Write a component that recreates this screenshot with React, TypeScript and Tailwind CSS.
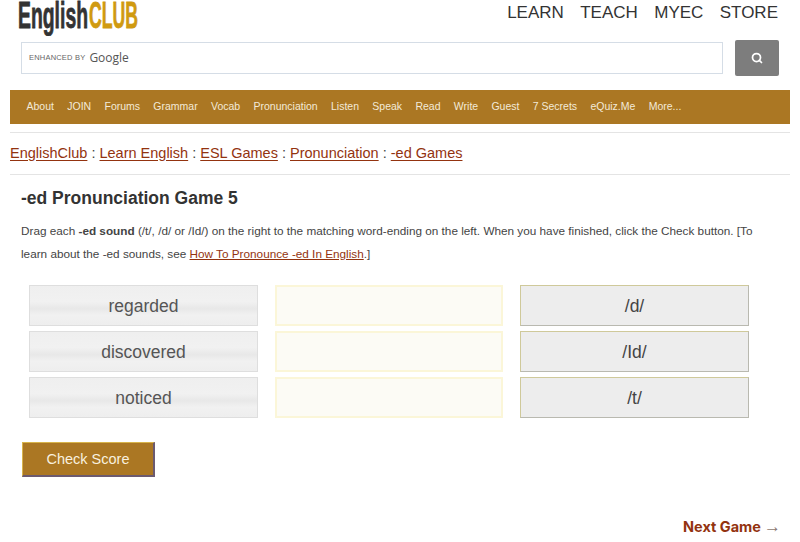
import React from 'react';
import { Search } from 'lucide-react';

const navItems = ['About', 'JOIN', 'Forums', 'Grammar', 'Vocab', 'Pronunciation', 'Listen', 'Speak', 'Read', 'Write', 'Guest', '7 Secrets', 'eQuiz.Me', 'More...'];
const topLinks = ['LEARN', 'TEACH', 'MYEC', 'STORE'];
const crumbs = ['EnglishClub', 'Learn English', 'ESL Games', 'Pronunciation', '-ed Games'];
const words = ['regarded', 'discovered', 'noticed'];
const sounds = ['/d/', '/Id/', '/t/'];

const Logo = () => (
  <svg width="122" height="36" viewBox="0 0 122 36" className="text-[36px] font-bold">
    <text x="0" y="28" textLength="70" lengthAdjust="spacingAndGlyphs" fill="#333" stroke="#333" strokeWidth="0.8">English</text>
    <text x="71" y="28" textLength="49" lengthAdjust="spacingAndGlyphs" fill="#d09a10" stroke="#d09a10" strokeWidth="0.8">CLUB</text>
  </svg>
);

const App: React.FC = () => {
  return (
    <div className="w-[800px] h-[542px] overflow-hidden bg-white font-['Liberation_Sans',Arial,sans-serif] text-[#444]">
      {/* Header */}
      <div className="flex h-[40px] items-start justify-between pl-[18px] pr-[22px]">
        <Logo />
        <div className="flex gap-[16.4px] pt-[3px] text-[17px] leading-[20px] text-[#333]">
          {topLinks.map((link) => (
            <span key={link}>{link}</span>
          ))}
        </div>
      </div>

      {/* Search */}
      <div className="flex items-center gap-[12px] pl-[21px] pr-[21px]">
        <div className="flex h-[32px] w-[703px] items-center gap-[4px] border border-[#d5dde6] pl-[7px]">
          <span className="text-[7.5px] tracking-[0.2px] text-[#666]">ENHANCED BY</span>
          <span className="font-['Open_Sans',sans-serif] text-[12px] text-[#555]">Google</span>
        </div>
        <div className="flex h-[36px] w-[44px] items-center justify-center rounded-[2px] bg-[#7d7d7d]">
          <Search className="h-[12px] w-[12px] text-white" strokeWidth={3.5} />
        </div>
      </div>

      {/* Nav */}
      <div className="mx-[10px] mt-[14px] flex h-[34px] items-center gap-[13.3px] bg-[#ab7723] pl-[16.5px] text-[10.5px] text-[#f3ead8]">
        {navItems.map((item) => (
          <span key={item}>{item}</span>
        ))}
      </div>

      {/* Breadcrumb */}
      <div className="mx-[10px] mt-[8px] flex h-[43px] items-center border-y border-[#e4e4e4] text-[14.5px] whitespace-pre text-[#444]">
        {crumbs.map((crumb, i) => (
          <span key={crumb}>
            {i > 0 && ' : '}
            <span className="text-[#93330f] underline underline-offset-2">{crumb}</span>
          </span>
        ))}
      </div>

      <div className="pl-[21px]">
        <h1 className="mt-[12px] text-[17.5px] leading-[22px] font-bold text-[#333]">-ed Pronunciation Game 5</h1>
        <p className="mt-[10px] w-[750px] text-[11.75px] leading-[23px] text-[#444]">
          Drag each <b>-ed sound</b> (/t/, /d/ or /Id/) on the right to the matching word-ending on the left. When you have finished, click the Check button. [To learn about the -ed sounds, see{' '}
          <span className="text-[#93330f] underline">How To Pronounce -ed In English</span>.]
        </p>
      </div>

      {/* Game */}
      <div className="mt-[20px] ml-[29px] grid w-[720px] grid-cols-[229px_228px_229px] gap-x-[17px] gap-y-[5px]">
        {words.map((word, i) => (
          <React.Fragment key={word}>
            <div className="flex h-[41px] items-center justify-center border border-[#dedede] bg-[linear-gradient(#efefef_0%,#f1f1f1_40%,#e8e8e8_58%,#f1f1f1_75%,#eeeeee_100%)] pt-[1px] text-[17.5px] text-[#555]">
              {word}
            </div>
            <div className="h-[41px] border-2 border-[#fbf6d8] bg-[#fcfbf5]" />
            <div className="flex h-[41px] items-center justify-center border border-[#b9b9b0] border-t-[#cfc99a] border-l-[#cfc99a] bg-[#ededed] pt-[1px] text-[17.5px] text-[#444]">
              {sounds[i]}
            </div>
          </React.Fragment>
        ))}
      </div>

      <button className="mt-[24px] ml-[22px] flex h-[35px] w-[133px] items-center justify-center border-t border-l border-t-[#d9b44a] border-l-[#d9b44a] border-b-2 border-r-2 border-b-[#6b5a70] border-r-[#6b5a70] bg-[#ab7723] pt-[1px] text-[14.5px] text-[#f8f0df]">
        Check Score
      </button>

      <div className="mt-[39px] flex h-[22px] items-center justify-end gap-[3px] pr-[19px] font-['Inter',sans-serif] text-[14.5px] font-bold text-[#93330f]">
        Next Game
        <span className="font-['Liberation_Sans',sans-serif] text-[17px] font-normal text-[#8d7a70]">→</span>
      </div>
    </div>
  );
};

export default App;
